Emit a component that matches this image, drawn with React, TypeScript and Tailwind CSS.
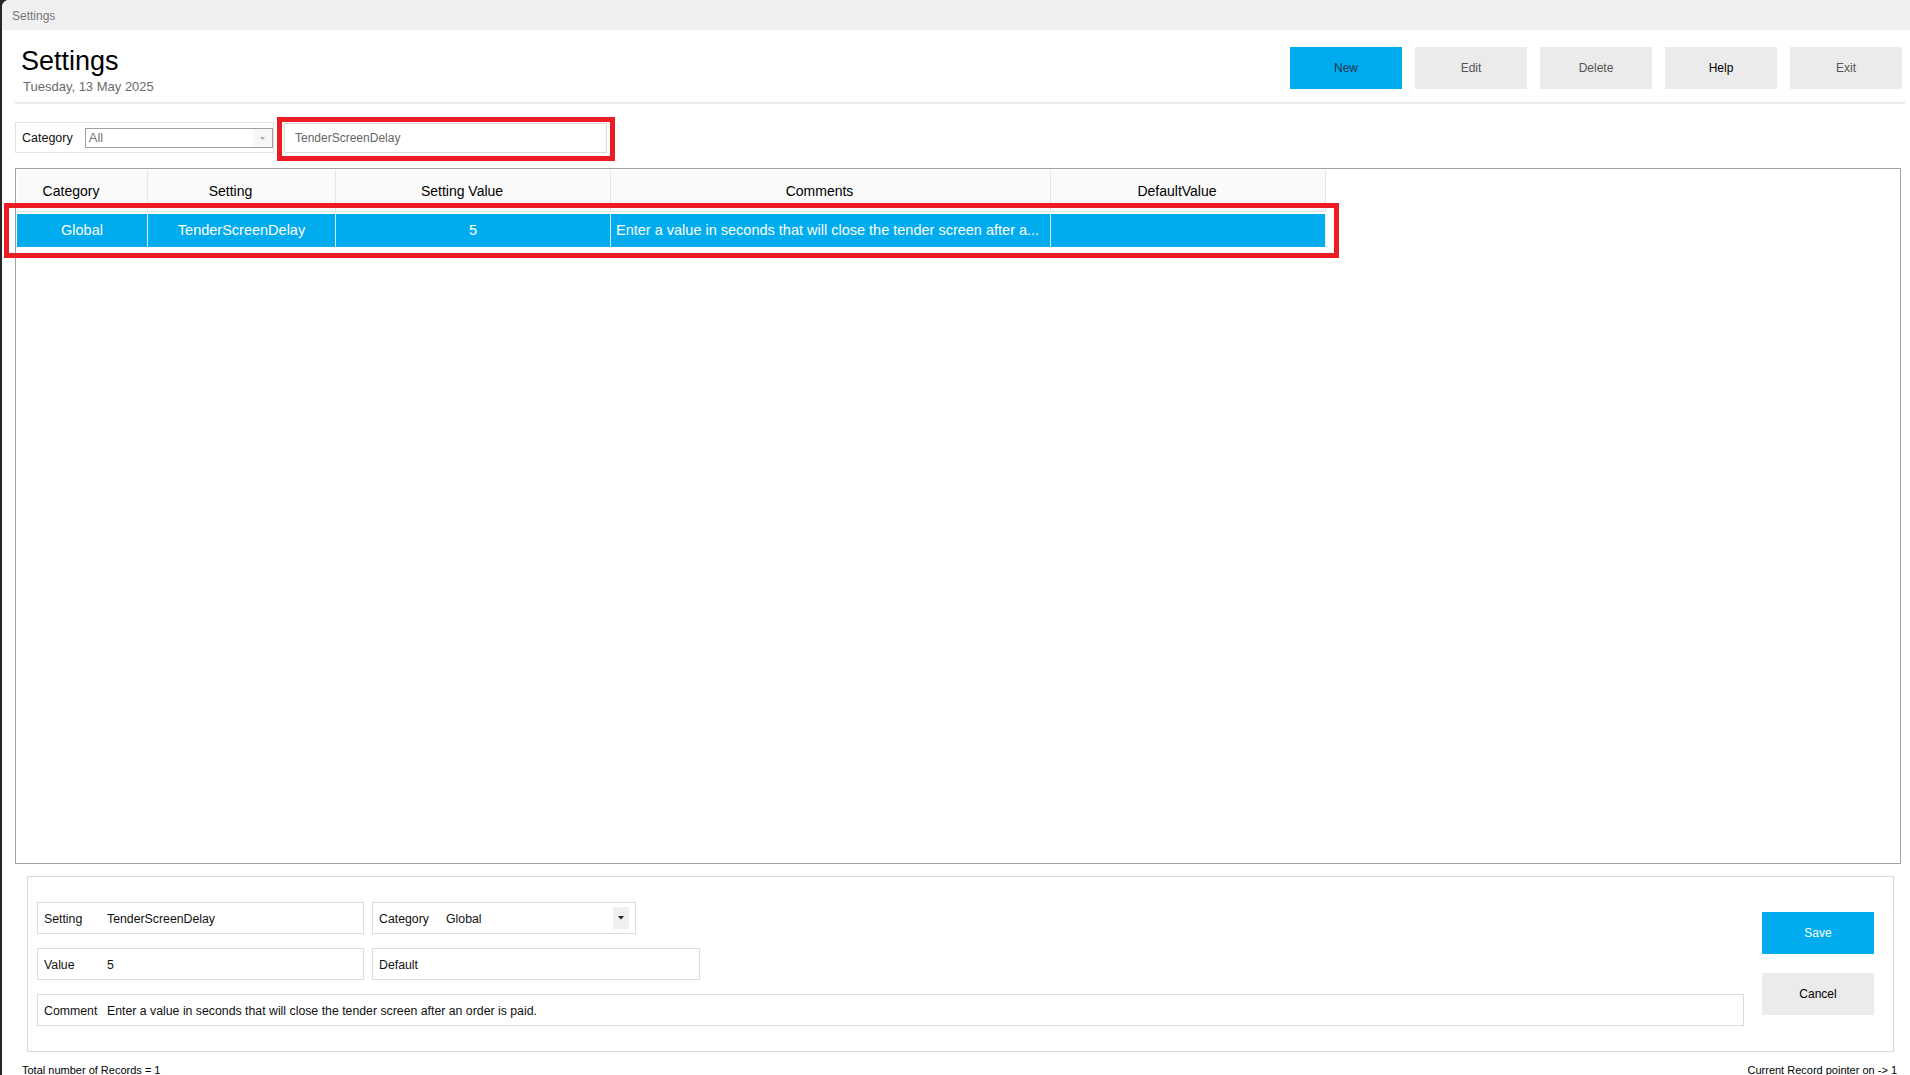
import React from 'react';

type Column = { key: string; title: string; width: string; align: 'center' | 'left' };

const columns: Column[] = [
  { key: 'category', title: 'Category', width: 'w-[131px]', align: 'center' },
  { key: 'setting', title: 'Setting', width: 'w-[188px]', align: 'center' },
  { key: 'value', title: 'Setting Value', width: 'w-[275px]', align: 'center' },
  { key: 'comments', title: 'Comments', width: 'w-[440px]', align: 'left' },
  { key: 'default', title: 'DefaultValue', width: 'w-[275px]', align: 'center' },
];

const rows = [
  {
    category: 'Global',
    setting: 'TenderScreenDelay',
    value: '5',
    comments: 'Enter a value in seconds that will close the tender screen after a...',
    default: '',
  },
];

function ToolbarButton({ label, primary, dark }: { label: string; primary?: boolean; dark?: boolean }) {
  return (
    <button
      className={`h-[42px] w-[112px] text-[12px] ${
        primary ? 'bg-[#00acee] text-[#1d3550]' : dark ? 'bg-[#ebebeb] text-black' : 'bg-[#ebebeb] text-[#555]'
      }`}
    >
      {label}
    </button>
  );
}

function Field({
  label,
  value,
  labelWidth = 'w-[63px]',
  width,
  dropdown,
}: {
  label: string;
  value?: string;
  labelWidth?: string;
  width: string;
  dropdown?: boolean;
}) {
  return (
    <div className={`flex h-[32px] ${width} items-center border border-[#dcdcdc] pl-[6px] pr-[6px] text-[12.3px] text-[#111]`}>
      <span className={`${value !== undefined ? labelWidth : ''} shrink-0 pt-[2px]`}>{label}</span>
      {value !== undefined && <span className="flex-1 truncate pt-[2px]">{value}</span>}
      {dropdown && (
        <span className="flex h-[22px] w-[16px] items-center justify-center bg-[#f0f0f0]">
          <svg width="6" height="4" viewBox="0 0 6 4">
            <path d="M0 0h6L3 3.5z" fill="#222" />
          </svg>
        </span>
      )}
    </div>
  );
}

export default function App() {
  return (
    <div className="h-screen w-full overflow-hidden bg-[#262626] pl-[2px] font-['Liberation_Sans',Arial,sans-serif]">
      <div className="flex h-full flex-col overflow-hidden rounded-tl-[7px] bg-white">
        {/* title bar */}
        <div className="flex h-[30px] shrink-0 items-center bg-[#f0f0f0] pl-[10px] pt-[2px] text-[12px] text-[#777]">Settings</div>

        {/* header */}
        <div className="flex h-[72px] shrink-0 justify-between">
          <div className="pl-[19px] pt-[16px]">
            <h1 className="text-[27px] leading-[31px] text-black">Settings</h1>
            <div className="ml-[2px] mt-[2px] text-[13px] leading-[15px] text-[#6b6b6b]">Tuesday, 13 May 2025</div>
          </div>
          <div className="mt-[17px] flex gap-[13px] pr-[8px]">
            <ToolbarButton label="New" primary />
            <ToolbarButton label="Edit" />
            <ToolbarButton label="Delete" />
            <ToolbarButton label="Help" dark />
            <ToolbarButton label="Exit" />
          </div>
        </div>
        <div className="ml-[13px] mr-[5px] h-[2px] shrink-0 bg-[#ebebeb]" />

        {/* filter */}
        <div className="ml-[13px] mt-[18px] flex shrink-0 items-start">
          <div className="flex h-[31px] w-[259px] items-center border border-[#e3e3e3] pl-[6px] pt-[1px] text-[12.5px] text-[#111]">
            <span>Category</span>
            <div className="ml-[12px] flex h-[20px] w-[188px] items-center border border-[#a0a0a0] bg-white">
              <span className="flex-1 pl-[3px] text-[13px] text-[#777]">All</span>
              <span className="flex h-full w-[19px] items-center justify-center bg-[#f7f7f7]">
                <svg width="5" height="3" viewBox="0 0 5 3">
                  <path d="M0 0h5L2.5 3z" fill="#aaa" />
                </svg>
              </span>
            </div>
          </div>
          <div className="relative ml-[10px] mt-[1px]">
            <div className="flex h-[30px] w-[323px] items-center border border-[#d9d9d9] pl-[10px] text-[12px] text-[#666]">
              TenderScreenDelay
            </div>
            <div className="pointer-events-none absolute -bottom-[8px] -left-[7px] -right-[8px] -top-[6px] border-[5px] border-[#ed1c24]" />
          </div>
        </div>

        {/* grid */}
        <div className="ml-[13px] mr-[9px] mt-[15px] h-[696px] shrink-0 border border-[#a0a0a0] p-[1px]">
          <div className="flex h-[42px] text-[14px] text-black">
            {columns.map((c) => (
              <div
                key={c.key}
                className={`${c.width} flex items-center justify-center border-b border-r border-[#e6e6e6] bg-[#fafafa] pr-[22px] pt-[2px]`}
              >
                {c.title}
              </div>
            ))}
          </div>
          {rows.map((r, i) => (
            <div key={i} className="relative mt-[2px] w-fit">
              <div className="flex h-[33px] bg-[#00acee] text-[14.5px] text-white">
                {columns.map((c) => (
                  <div
                    key={c.key}
                    className={`${c.width} flex items-center overflow-hidden whitespace-nowrap border-r border-[#d8f1fc] ${
                      c.align === 'center' ? 'justify-center' : 'pl-[5px]'
                    }`}
                  >
                    {r[c.key as keyof typeof r]}
                  </div>
                ))}
              </div>
              <div className="pointer-events-none absolute -bottom-[11px] -left-[13px] -right-[13px] -top-[11px] border-[5px] border-[#ed1c24]" />
            </div>
          ))}
        </div>

        {/* edit panel */}
        <div className="ml-[25px] mr-[16px] mt-[12px] flex h-[176px] shrink-0 border border-[#d9d9d9] pl-[9px] pr-[19px]">
          <div className="flex flex-1 flex-col gap-[14px] pt-[25px]">
            <div className="flex gap-[8px]">
              <Field label="Setting" value="TenderScreenDelay" width="w-[327px]" />
              <Field label="Category" value="Global" labelWidth="w-[67px]" width="w-[264px]" dropdown />
            </div>
            <div className="flex gap-[8px]">
              <Field label="Value" value="5" width="w-[327px]" />
              <Field label="Default" width="w-[328px]" />
            </div>
            <Field
              label="Comment"
              value="Enter a value in seconds that will close the tender screen after an order is paid."
              width="w-full"
            />
          </div>
          <div className="ml-[18px] flex flex-col gap-[19px] pt-[35px]">
            <button className="h-[42px] w-[112px] bg-[#00acee] text-[12px] text-white">Save</button>
            <button className="h-[42px] w-[112px] bg-[#ebebeb] text-[12px] text-black">Cancel</button>
          </div>
        </div>

        {/* status line */}
        <div className="mt-[12px] flex shrink-0 justify-between pl-[20px] pr-[13px] text-[11px] leading-[13px] text-black">
          <span>Total number of Records = 1</span>
          <span>Current Record pointer on -&gt; 1</span>
        </div>
      </div>
    </div>
  );
}
